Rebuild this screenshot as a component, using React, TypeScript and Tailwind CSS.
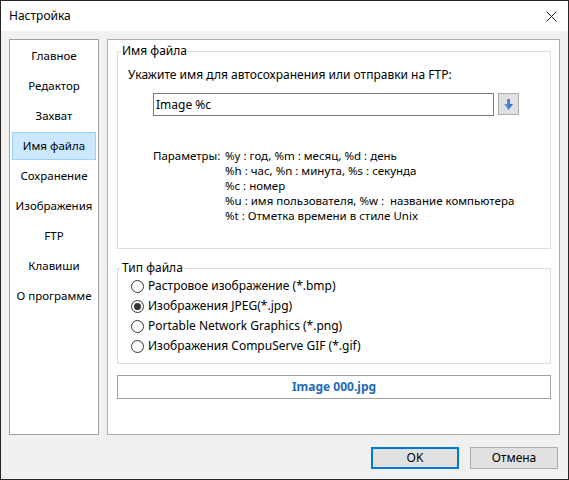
import React, { useState } from "react";

const sections = [
  "Главное",
  "Редактор",
  "Захват",
  "Имя файла",
  "Сохранение",
  "Изображения",
  "FTP",
  "Клавиши",
  "О программе",
];

const fileTypes = [
  "Растровое изображение (*.bmp)",
  "Изображения JPEG(*.jpg)",
  "Portable Network Graphics (*.png)",
  "Изображения CompuServe GIF (*.gif)",
];

const params: [string, string][] = [
  ["Параметры:", "%y : год, %m : месяц, %d : день"],
  ["", "%h : час, %n : минута, %s : секунда"],
  ["", "%c : номер"],
  ["", "%u : имя пользователя, %w :  название компьютера"],
  ["", "%t : Отметка времени в стиле Unix"],
];

function Group({
  title,
  className,
  children,
}: {
  title: string;
  className: string;
  children: React.ReactNode;
}) {
  return (
    <div className={`relative w-[434px] border border-[#dcdcdc] ${className}`}>
      <span className="absolute -top-[9px] left-[3px] bg-white px-[1px] leading-[16px]">
        {title}
      </span>
      {children}
    </div>
  );
}

export default function App() {
  const [active, setActive] = useState(3);
  const [fileType, setFileType] = useState(1);
  const [pattern, setPattern] = useState("Image %c");

  return (
    <div className="w-[569px] h-[480px] border border-[#262626] bg-[#f0f0f0] flex flex-col text-[12px] text-black font-['Noto_Sans',sans-serif]">
      {/* Title bar */}
      <div className="h-[30px] bg-white flex items-center justify-between pl-[8px] pr-[11px]">
        <span className="leading-[16px]">Настройка</span>
        <svg width="11" height="11" viewBox="0 0 11 11" className="text-[#222]">
          <path d="M0.5 0.5 L10.5 10.5 M10.5 0.5 L0.5 10.5" stroke="currentColor" strokeWidth="1" />
        </svg>
      </div>

      <div className="flex-1 flex flex-col px-[8px] pt-[8px]">
        <div className="flex gap-[8px] h-[396px]">
          {/* Sidebar */}
          <div className="w-[90px] border border-[#a0a0a0] bg-white p-[2px] flex flex-col gap-[2px]">
            {sections.map((s, i) => (
              <button
                key={s}
                onClick={() => setActive(i)}
                className={`h-[28px] flex items-center justify-center border leading-[16px] text-[11.5px] ${
                  i === active ? "bg-[#cce8ff] border-[#99d1ff]" : "border-transparent"
                }`}
              >
                {s}
              </button>
            ))}
          </div>

          {/* Content */}
          <div className="flex-1 border border-[#adadad] bg-white pl-[9px] pt-[11px]">
            <Group title="Имя файла" className="h-[198px] pl-[10px] pt-[15px]">
              <p className="leading-[16px]">
                Укажите имя для автосохранения или отправки на FTP:
              </p>
              <div className="flex items-start ml-[25px] mt-[10px]">
                <input
                  value={pattern}
                  onChange={(e) => setPattern(e.target.value)}
                  className="w-[341px] h-[23px] border border-[#7a7a7a] px-[2px] outline-none"
                />
                <button className="ml-[4px] w-[21px] h-[22px] border border-[#adadad] bg-[#e1e1e1] flex items-center justify-center">
                  <svg width="9" height="11" viewBox="0 0 9 11">
                    <defs>
                      <linearGradient id="arr" x1="0" y1="0" x2="1" y2="0">
                        <stop offset="0" stopColor="#6fa6ee" />
                        <stop offset="1" stopColor="#1f5fc8" />
                      </linearGradient>
                    </defs>
                    <path d="M3 0 H6 V5 H9 L4.5 11 L0 5 H3 Z" fill="url(#arr)" />
                  </svg>
                </button>
              </div>
              <div className="ml-[25px] mt-[32px] grid grid-cols-[72px_1fr] leading-[15px] text-[11.5px]">
                {params.map(([a, b], i) => (
                  <React.Fragment key={i}>
                    <span>{a}</span>
                    <span className="whitespace-pre">{b}</span>
                  </React.Fragment>
                ))}
              </div>
            </Group>

            <Group title="Тип файла" className="mt-[19px] h-[96px] pl-[13px] pt-[7px]">
              {fileTypes.map((t, i) => (
                <label
                  key={t}
                  onClick={() => setFileType(i)}
                  className="h-[20px] flex items-center gap-[4px] leading-[16px] cursor-default"
                >
                  <span className="w-[13px] h-[13px] rounded-full border border-[#333] bg-white flex items-center justify-center">
                    {i === fileType && (
                      <span className="w-[7px] h-[7px] rounded-full bg-[#333]" />
                    )}
                  </span>
                  {t}
                </label>
              ))}
            </Group>

            <div className="mt-[11px] w-[434px] h-[24px] border border-[#a0a0a0] flex items-center justify-center font-bold text-[#1c6bb5]">
              Image 000.{["bmp", "jpg", "png", "gif"][fileType]}
            </div>
          </div>
        </div>

        {/* Buttons */}
        <div className="mt-[12px] flex justify-end gap-[11px] mr-[2px]">
          <button className="w-[88px] h-[22px] border-2 border-[#0078d7] bg-[#e1e1e1] leading-[16px]">
            OK
          </button>
          <button className="w-[88px] h-[22px] border border-[#adadad] bg-[#e1e1e1] leading-[16px]">
            Отмена
          </button>
        </div>
      </div>
    </div>
  );
}
